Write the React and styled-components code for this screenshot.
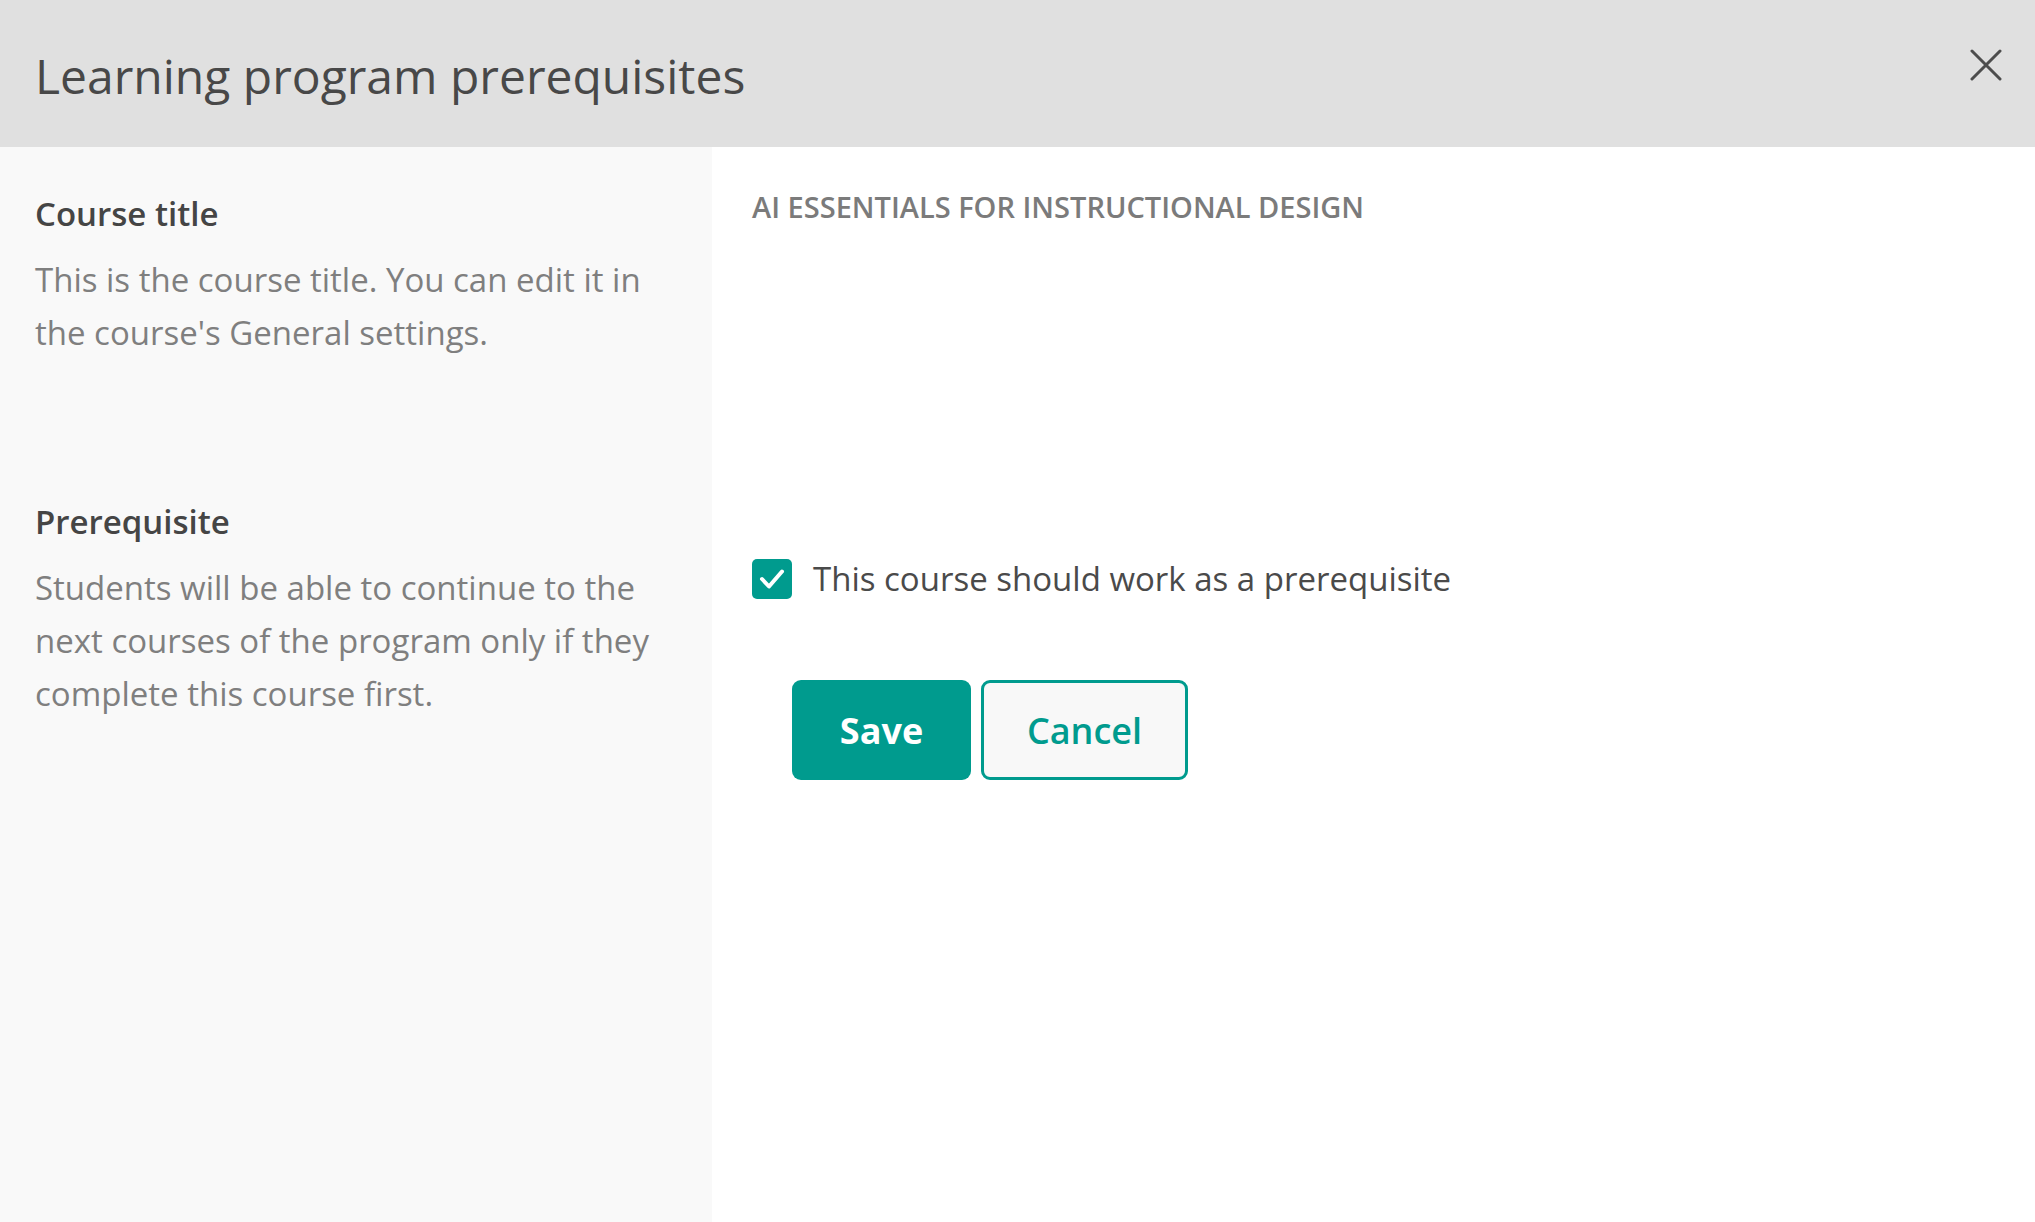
import React from "react";
import styled, { createGlobalStyle } from "styled-components";

const GlobalStyle = createGlobalStyle`
  html, body {
    margin: 0;
    padding: 0;
    background: #ffffff;
  }
  body {
    font-family: "Open Sans", "Noto Sans", Arial, sans-serif;
  }
  * {
    box-sizing: border-box;
  }
`;

export default function App() {
  const [checked, setChecked] = React.useState(true);

  return (
    <Modal>
      <GlobalStyle />
      <Header>
        <Title>Learning program prerequisites</Title>
        <CloseButton aria-label="Close">
          <svg width="32" height="32" viewBox="0 0 32 32">
            <path
              d="M2 2 L30 30 M30 2 L2 30"
              stroke="#4d4d4d"
              strokeWidth="3"
              strokeLinecap="round"
            />
          </svg>
        </CloseButton>
      </Header>

      <Body>
        <Side first>
          <Label>Course title</Label>
          <Hint>
            This is the course title. You can edit it in
            <br />
            the course's General settings.
          </Hint>
        </Side>
        <Main first>
          <CourseName>AI ESSENTIALS FOR INSTRUCTIONAL DESIGN</CourseName>
        </Main>

        <Side>
          <Label>Prerequisite</Label>
          <Hint>
            Students will be able to continue to the
            <br />
            next courses of the program only if they
            <br />
            complete this course first.
          </Hint>
        </Side>
        <Main>
          <CheckRow onClick={() => setChecked((c) => !c)}>
            <Box checked={checked}>
              {checked && (
                <svg width="40" height="40" viewBox="0 0 40 40">
                  <path
                    d="M10 20 L17 27.5 L30 12.5"
                    fill="none"
                    stroke="#ffffff"
                    strokeWidth="4"
                    strokeLinecap="round"
                    strokeLinejoin="round"
                  />
                </svg>
              )}
            </Box>
            <CheckText>This course should work as a prerequisite</CheckText>
          </CheckRow>
          <Actions>
            <SaveButton>Save</SaveButton>
            <CancelButton>Cancel</CancelButton>
          </Actions>
        </Main>

        <Side filler />
        <Main filler />
      </Body>
    </Modal>
  );
}

//Styling components

const Modal = styled.div`
  width: 100%;
  height: 100vh;
  display: flex;
  flex-direction: column;
  overflow: hidden;
`;

const Header = styled.div`
  height: 147px;
  flex-shrink: 0;
  background-color: #e0e0e0;
  display: flex;
  justify-content: space-between;
  align-items: flex-start;
  padding: 47px 33px 0 35px;
`;

const Title = styled.h1`
  margin: 0;
  font-size: 48px;
  line-height: 57px;
  font-weight: 500;
  color: #484848;
`;

const CloseButton = styled.button`
  margin-top: 2px;
  padding: 0;
  border: none;
  background: transparent;
  cursor: pointer;
  width: 32px;
  height: 32px;
  display: flex;
`;

const Body = styled.div`
  flex: 1;
  display: grid;
  grid-template-columns: 712px 1fr;
  grid-template-rows: auto auto 1fr;
`;

const Side = styled.div`
  background-color: #f9f9f9;
  padding: ${(props) =>
    props.filler ? "0" : props.first ? "45px 35px 96px" : "45px 35px 0"};
`;

const Main = styled.div`
  background-color: #ffffff;
  padding: ${(props) =>
    props.filler ? "0" : props.first ? "40px 40px 0" : "102px 40px 0"};
`;

const Label = styled.div`
  font-size: 33px;
  line-height: 44px;
  font-weight: 600;
  color: #454545;
`;

const Hint = styled.p`
  margin: 17px 0 0;
  font-size: 33px;
  line-height: 53px;
  color: #7f7f7f;
`;

const CourseName = styled.div`
  font-size: 29px;
  line-height: 40px;
  font-weight: 600;
  color: #7b7b7b;
  text-transform: uppercase;
`;

const CheckRow = styled.label`
  display: flex;
  align-items: center;
  gap: 21px;
  height: 44px;
  cursor: pointer;
`;

const Box = styled.span`
  width: 40px;
  height: 40px;
  border-radius: 5px;
  background-color: ${(props) => (props.checked ? "#009b8e" : "#ffffff")};
  border: ${(props) => (props.checked ? "none" : "2px solid #9a9a9a")};
  display: flex;
  flex-shrink: 0;
`;

const CheckText = styled.span`
  font-size: 33px;
  line-height: 44px;
  color: #4a4a4a;
`;

const Actions = styled.div`
  display: flex;
  gap: 10px;
  margin: 79px 0 0 40px;
`;

const SaveButton = styled.button`
  height: 100px;
  width: 179px;
  border-radius: 9px;
  border: none;
  background-color: #009b8e;
  color: #ffffff;
  font-family: "Open Sans", "Noto Sans", Arial, sans-serif;
  font-size: 36px;
  font-weight: 700;
  cursor: pointer;
`;

const CancelButton = styled(SaveButton)`
  width: 207px;
  background-color: #f8f8f8;
  border: 3px solid #009b8e;
  color: #009b8e;
  font-weight: 600;
`;
